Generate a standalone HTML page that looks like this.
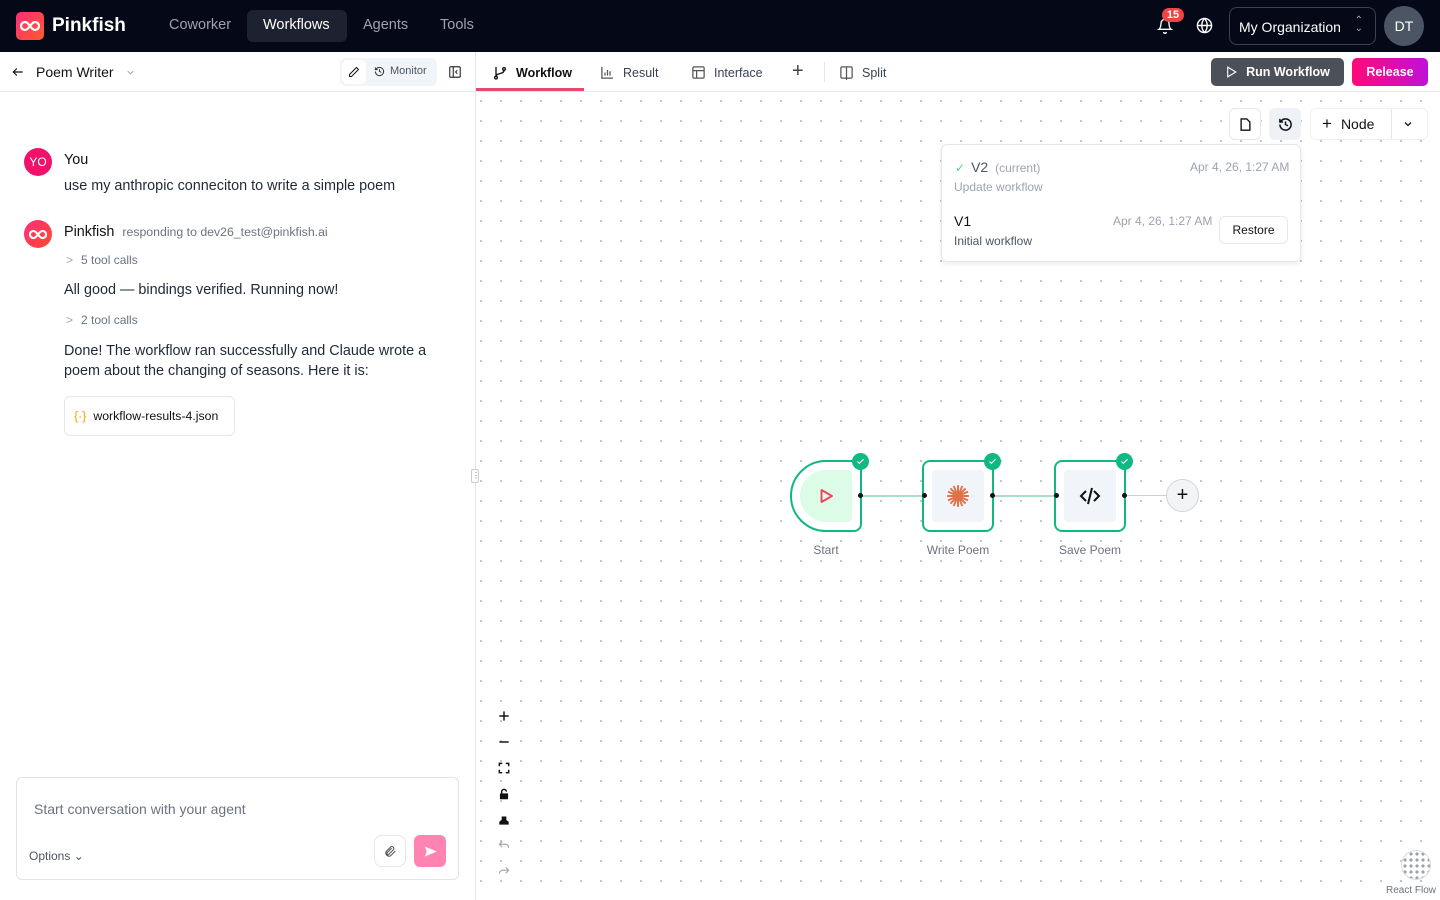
<!DOCTYPE html>
<html><head><meta charset="utf-8">
<style>
*{box-sizing:border-box;margin:0;padding:0}
body{width:1440px;height:900px;overflow:hidden;font-family:"Liberation Sans",sans-serif;background:#fff;color:#111;position:relative}
.abs{position:absolute}
.top{left:0;top:0;width:1440px;height:52px;background:#050816}
.nav{font-size:14.5px;color:#9ca3af;top:17px}
.chat{left:0;top:52px;width:476px;height:848px;border-right:1px solid #e5e7eb}
.canvas{left:476px;top:92px;width:964px;height:808px;background-image:radial-gradient(circle,#b8bcc4 0.9px,transparent 1.2px);background-size:20px 20px;background-position:-5px -1px}
.tab{font-size:12.5px;color:#374151;top:65px;display:flex;align-items:center;gap:8px}
svg{display:block}
.node{width:72px;height:72px;border:2.5px solid #10b981;border-radius:8px;background:#fff}
.inner{position:absolute;left:8px;top:8px;width:52px;height:52px;background:#f1f4f8;border-radius:4px;display:flex;align-items:center;justify-content:center}
.chk{position:absolute;right:-9px;top:-9px;width:17px;height:17px;border-radius:50%;background:#10b981;display:flex;align-items:center;justify-content:center}
.lbl{font-size:12px;color:#6b7280;text-align:center;width:120px}
.dot{width:5px;height:5px;border-radius:50%;background:#111}
.ctrl{left:497px;width:14px;height:14px}
.t14{font-size:14.4px}
</style></head><body>
<div class="abs top"></div>
<div class="abs" style="left:16px;top:12px;width:28px;height:28px;border-radius:5px;background:linear-gradient(135deg,#ff2d7a,#ff5a2d);display:flex;align-items:center;justify-content:center">
<svg width="20" height="12" viewBox="0 0 20 12"><path d="M5 2a4 4 0 1 0 0 8c2 0 3.5-2 5-4s3-4 5-4a4 4 0 1 1 0 8c-2 0-3.5-2-5-4S7 2 5 2z" fill="none" stroke="#fff" stroke-width="2.2"/></svg></div>
<div class="abs" style="left:52px;top:15px;font-size:19px;font-weight:bold;color:#fff">Pinkfish</div>
<div class="abs nav" style="left:169px">Coworker</div>
<div class="abs" style="left:247px;top:10px;width:100px;height:32px;border-radius:6px;background:#1c2230"></div>
<div class="abs nav" style="left:263px;color:#fff">Workflows</div>
<div class="abs nav" style="left:363px">Agents</div>
<div class="abs nav" style="left:440px">Tools</div>
<svg class="abs" style="left:1157px;top:18px" width="16" height="16" viewBox="0 0 24 24" fill="none" stroke="#fff" stroke-width="2"><path d="M6 8a6 6 0 0 1 12 0c0 7 3 9 3 9H3s3-2 3-9M10 21a2 2 0 0 0 4 0"/></svg>
<div class="abs" style="left:1162px;top:8px;width:22px;height:14px;border-radius:7px;background:#ef4444;color:#fff;font-size:11px;font-weight:bold;text-align:center;line-height:14px">15</div>
<svg class="abs" style="left:1196px;top:17px" width="17" height="17" viewBox="0 0 24 24" fill="none" stroke="#fff" stroke-width="2"><circle cx="12" cy="12" r="10"/><path d="M2 12h20M12 2a15 15 0 0 1 0 20M12 2a15 15 0 0 0 0 20"/></svg>
<div class="abs" style="left:1229px;top:7px;width:147px;height:38px;border:1px solid #3a4150;border-radius:8px;color:#fff;font-size:14px;padding:11px 0 0 9px">My Organization<span style="position:absolute;right:12px;top:9px;font-size:10px;color:#aaa;line-height:8px">⌃<br>⌄</span></div>
<div class="abs" style="left:1384px;top:6px;width:40px;height:40px;border-radius:50%;background:#4b5563;color:#fff;font-size:14px;text-align:center;line-height:40px">DT</div>

<div class="abs chat"></div>
<div class="abs" style="left:0;top:91px;width:476px;border-top:1px solid #e5e7eb"></div>
<svg class="abs" style="left:11px;top:65px" width="14" height="14" viewBox="0 0 24 24" fill="none" stroke="#111" stroke-width="2"><path d="M20 12H4M10 6l-6 6 6 6"/></svg>
<div class="abs" style="left:36px;top:64px;font-size:14px">Poem Writer</div>
<svg class="abs" style="left:125px;top:67px" width="11" height="11" viewBox="0 0 24 24" fill="none" stroke="#9ca3af" stroke-width="2"><path d="M6 9l6 6 6-6"/></svg>
<div class="abs" style="left:340px;top:58px;width:97px;height:28px;border-radius:6px;background:#f1f4f8"></div>
<div class="abs" style="left:342px;top:60px;width:24px;height:24px;border-radius:5px;background:#fff"></div>
<svg class="abs" style="left:348px;top:66px" width="12" height="12" viewBox="0 0 24 24" fill="none" stroke="#111" stroke-width="2"><path d="M17 3l4 4L7 21H3v-4z"/></svg>
<svg class="abs" style="left:374px;top:66px" width="11" height="11" viewBox="0 0 24 24" fill="none" stroke="#333" stroke-width="2.2"><path d="M3 12a9 9 0 1 0 3-6.7L3 8M3 3v5h5M12 7v5l4 2"/></svg>
<div class="abs" style="left:390px;top:65px;font-size:11px;color:#4b5563">Monitor</div>
<svg class="abs" style="left:448px;top:65px" width="14" height="14" viewBox="0 0 24 24" fill="none" stroke="#333" stroke-width="2"><rect x="3" y="3" width="18" height="18" rx="2"/><path d="M9 3v18M16 9l-3 3 3 3"/></svg>

<div class="abs" style="left:24px;top:148px;width:28px;height:28px;border-radius:50%;background:#f0126b;color:#fff;font-size:12px;text-align:center;line-height:28px">YO</div>
<div class="abs t14" style="left:64px;top:152px">You</div>
<div class="abs t14" style="left:64px;top:178px;color:#1f2937">use my anthropic conneciton to write a simple poem</div>
<div class="abs" style="left:24px;top:220px;width:28px;height:28px;border-radius:50%;background:linear-gradient(135deg,#ff2d7a,#ff4a2d);display:flex;align-items:center;justify-content:center"><svg width="18" height="11" viewBox="0 0 20 12"><path d="M5 2a4 4 0 1 0 0 8c2 0 3.5-2 5-4s3-4 5-4a4 4 0 1 1 0 8c-2 0-3.5-2-5-4S7 2 5 2z" fill="none" stroke="#fff" stroke-width="2.4"/></svg></div>
<div class="abs t14" style="left:64px;top:224px">Pinkfish <span style="font-size:12.3px;color:#6b7280;margin-left:4px">responding to dev26_test@pinkfish.ai</span></div>
<div class="abs" style="left:66px;top:253px;font-size:12px;color:#6b7280"><span style="color:#9ca3af;margin-right:8px">&gt;</span>5 tool calls</div>
<div class="abs t14" style="left:64px;top:282px;color:#1f2937">All good — bindings verified. Running now!</div>
<div class="abs" style="left:66px;top:313px;font-size:12px;color:#6b7280"><span style="color:#9ca3af;margin-right:8px">&gt;</span>2 tool calls</div>
<div class="abs t14" style="left:64px;top:341px;color:#1f2937;line-height:20px;width:380px">Done! The workflow ran successfully and Claude wrote a poem about the changing of seasons. Here it is:</div>
<div class="abs" style="left:64px;top:396px;width:171px;height:40px;border:1px solid #e5e7eb;border-radius:6px;font-size:12.3px;padding:12px 0 0 9px"><span style="color:#f59e0b;margin-right:7px">{·}</span>workflow-results-4.json</div>

<div class="abs" style="left:16px;top:777px;width:443px;height:103px;border:1px solid #e0e3e8;border-radius:6px"></div>
<div class="abs" style="left:34px;top:801px;font-size:14px;color:#6b7280">Start conversation with your agent</div>
<div class="abs" style="left:29px;top:849px;font-size:12px;color:#4b5563">Options ⌄</div>
<div class="abs" style="left:374px;top:835px;width:32px;height:32px;border:1px solid #e5e7eb;border-radius:8px;display:flex;align-items:center;justify-content:center"><svg width="13" height="13" viewBox="0 0 24 24" fill="none" stroke="#555" stroke-width="2"><path d="M21 11l-9 9a6 6 0 0 1-8-8l9-9a4 4 0 0 1 5 5l-9 9a2 2 0 0 1-3-3l8-8"/></svg></div>
<div class="abs" style="left:414px;top:835px;width:32px;height:32px;border-radius:6px;background:#ff84b2;display:flex;align-items:center;justify-content:center"><svg width="15" height="15" viewBox="0 0 24 24"><path d="M3 4l19 8-19 8 3-8z" fill="#fff"/></svg></div>

<div class="abs canvas"></div>
<div class="abs" style="left:476px;top:91px;width:964px;border-top:1px solid #e5e7eb"></div>
<div class="abs" style="left:471px;top:469px;width:8px;height:14px;border:1px solid #ccc;border-radius:2px;background:#fff;font-size:8px;line-height:12px;text-align:center;color:#666">⋮</div>
<div class="abs tab" style="left:492px;font-weight:bold;color:#111"><svg width="16" height="16" viewBox="0 0 24 24" fill="none" stroke="#111" stroke-width="2"><circle cx="6" cy="19" r="2"/><circle cx="18" cy="6" r="2"/><path d="M6 3v14M18 8c0 6-12 4-12 9"/></svg>Workflow</div>
<div class="abs" style="left:476px;top:88px;width:108px;height:3px;background:#e8486e"></div>
<div class="abs tab" style="left:600px"><svg width="15" height="15" viewBox="0 0 24 24" fill="none" stroke="#555" stroke-width="2"><path d="M3 3v18h18M8 17v-5M12 17V8M16 17v-7"/></svg>Result</div>
<div class="abs tab" style="left:691px"><svg width="15" height="15" viewBox="0 0 24 24" fill="none" stroke="#555" stroke-width="2"><rect x="3" y="3" width="18" height="18" rx="2"/><path d="M3 9h18M9 9v12"/></svg>Interface</div>
<div class="abs" style="left:792px;top:60px;font-size:20px;color:#444">+</div>
<div class="abs" style="left:824px;top:62px;height:20px;border-left:1px solid #e5e7eb"></div>
<div class="abs tab" style="left:839px"><svg width="15" height="15" viewBox="0 0 24 24" fill="none" stroke="#555" stroke-width="2"><rect x="3" y="3" width="18" height="18" rx="2"/><path d="M12 3v21"/></svg>Split</div>
<div class="abs" style="left:1211px;top:58px;width:133px;height:28px;border-radius:5px;background:#4b5059;color:#fff;font-size:12.5px;font-weight:bold;display:flex;align-items:center;justify-content:center;gap:8px"><svg width="13" height="14" viewBox="0 0 24 24" fill="none" stroke="#fff" stroke-width="2"><path d="M5 3l15 9-15 9z"/></svg>Run Workflow</div>
<div class="abs" style="left:1352px;top:58px;width:76px;height:28px;border-radius:5px;background:linear-gradient(90deg,#ff0a78,#c010d8);color:#fff;font-size:12.5px;font-weight:bold;text-align:center;line-height:28px">Release</div>

<div class="abs" style="left:1229px;top:108px;width:32px;height:32px;border:1px solid #e5e7eb;border-radius:6px;background:#fff;display:flex;align-items:center;justify-content:center"><svg width="15" height="15" viewBox="0 0 24 24" fill="none" stroke="#111" stroke-width="2.2"><path d="M5 3h9l5 5v13H5z"/></svg></div>
<div class="abs" style="left:1269px;top:108px;width:32px;height:32px;border-radius:6px;background:#eef2f7;display:flex;align-items:center;justify-content:center"><svg width="15" height="15" viewBox="0 0 24 24" fill="none" stroke="#111" stroke-width="2.4"><path d="M3 12a9 9 0 1 0 3-6.7L3 8M3 3v5h5M12 7v5l4 2"/></svg></div>
<div class="abs" style="left:1310px;top:108px;width:118px;height:32px;border-radius:6px;background:#fff;border:1px solid #f0f0f0"></div>
<div class="abs" style="left:1391px;top:108px;height:32px;border-left:1px solid #e5e7eb"></div>
<div class="abs" style="left:1322px;top:114px;font-size:14px;color:#111"><span style="font-size:17px;margin-right:9px">+</span>Node</div>
<svg class="abs" style="left:1402px;top:118px" width="12" height="12" viewBox="0 0 24 24" fill="none" stroke="#111" stroke-width="2.5"><path d="M6 9l6 6 6-6"/></svg>

<div class="abs" style="left:941px;top:144px;width:360px;height:118px;border:1px solid #e5e7eb;border-radius:6px;background:#fff;box-shadow:0 2px 6px rgba(0,0,0,.08)"></div>
<div class="abs" style="left:955px;top:159px;font-size:14px;color:#4b5563"><span style="color:#4ade80;font-size:12px;margin-right:6px">✓</span>V2 <span style="font-size:12px;color:#9ca3af;margin-left:3px">(current)</span></div>
<div class="abs" style="left:1190px;top:160px;font-size:12px;color:#9ca3af">Apr 4, 26, 1:27 AM</div>
<div class="abs" style="left:954px;top:180px;font-size:12px;color:#9ca3af">Update workflow</div>
<div class="abs" style="left:954px;top:213px;font-size:14px;color:#111">V1</div>
<div class="abs" style="left:1113px;top:214px;font-size:12px;color:#9ca3af">Apr 4, 26, 1:27 AM</div>
<div class="abs" style="left:954px;top:234px;font-size:12px;color:#4b5563">Initial workflow</div>
<div class="abs" style="left:1219px;top:216px;width:69px;height:28px;border:1px solid #e5e7eb;border-radius:6px;font-size:12px;text-align:center;line-height:27px">Restore</div>

<div class="abs" style="left:860px;top:495px;width:64px;border-top:2px solid #a7dfc4"></div>
<div class="abs" style="left:992px;top:495px;width:64px;border-top:2px solid #a7dfc4"></div>
<div class="abs" style="left:1124px;top:495px;width:44px;border-top:1px solid #cbd0d8"></div>
<div class="abs node" style="left:790px;top:460px;border-radius:36px 8px 8px 36px"><div class="inner" style="background:#dcfce7;border-radius:26px 4px 4px 26px"><svg width="18" height="18" viewBox="0 0 24 24" fill="none" stroke="#f43f5e" stroke-width="2.5"><path d="M6 4l14 8-14 8z" stroke-linejoin="round"/></svg></div><div class="chk"><svg width="9" height="9" viewBox="0 0 24 24" fill="none" stroke="#fff" stroke-width="3"><path d="M4 12l5 5 11-11"/></svg></div></div>
<div class="abs node" style="left:922px;top:460px"><div class="inner"><svg width="26" height="26" viewBox="0 0 24 24" stroke="#e0724a" stroke-width="1.8"><path d="M12 2v20M2 12h20M5 5l14 14M19 5L5 19M8 2.8l8 18.4M16 2.8L8 21.2M2.8 8l18.4 8M2.8 16l18.4-8"/></svg></div><div class="chk"><svg width="9" height="9" viewBox="0 0 24 24" fill="none" stroke="#fff" stroke-width="3"><path d="M4 12l5 5 11-11"/></svg></div></div>
<div class="abs node" style="left:1054px;top:460px"><div class="inner"><svg width="24" height="24" viewBox="0 0 24 24" fill="none" stroke="#111" stroke-width="2"><path d="M8 7l-5 5 5 5M16 7l5 5-5 5M14 4l-4 16"/></svg></div><div class="chk"><svg width="9" height="9" viewBox="0 0 24 24" fill="none" stroke="#fff" stroke-width="3"><path d="M4 12l5 5 11-11"/></svg></div></div>
<div class="abs dot" style="left:858px;top:493px"></div><div class="abs dot" style="left:922px;top:493px"></div>
<div class="abs dot" style="left:990px;top:493px"></div><div class="abs dot" style="left:1054px;top:493px"></div>
<div class="abs dot" style="left:1122px;top:493px"></div>
<div class="abs" style="left:1166px;top:479px;width:33px;height:33px;border-radius:50%;border:1px solid #d1d5db;background:#f3f4f6;text-align:center;line-height:30px;font-size:20px;color:#111">+</div>
<div class="abs lbl" style="left:766px;top:543px">Start</div>
<div class="abs lbl" style="left:898px;top:543px">Write Poem</div>
<div class="abs lbl" style="left:1030px;top:543px">Save Poem</div>

<svg class="abs ctrl" style="top:709px" viewBox="0 0 24 24" stroke="#111" stroke-width="2.5"><path d="M12 4v16M4 12h16"/></svg>
<svg class="abs ctrl" style="top:735px" viewBox="0 0 24 24" stroke="#111" stroke-width="2.5"><path d="M4 12h16"/></svg>
<svg class="abs ctrl" style="top:761px" viewBox="0 0 24 24" fill="none" stroke="#111" stroke-width="2.5"><path d="M4 9V4h5M15 4h5v5M20 15v5h-5M9 20H4v-5"/></svg>
<svg class="abs ctrl" style="top:787px" viewBox="0 0 24 24"><rect x="5" y="11" width="14" height="10" rx="1" fill="#111"/><path d="M8 11V8a4 4 0 0 1 8 0" fill="none" stroke="#111" stroke-width="2.5"/></svg>
<svg class="abs ctrl" style="top:813px" viewBox="0 0 24 24"><path d="M4 20h16v-5l-4-3V6h-8v6l-4 3z" fill="#111"/></svg>
<svg class="abs ctrl" style="top:839px" viewBox="0 0 24 24" fill="none" stroke="#aaa" stroke-width="2"><path d="M9 14L4 9l5-5M4 9h10a6 6 0 0 1 6 6"/></svg>
<svg class="abs ctrl" style="top:865px" viewBox="0 0 24 24" fill="none" stroke="#aaa" stroke-width="2"><path d="M15 14l5-5-5-5M20 9H10a6 6 0 0 0-6 6"/></svg>

<div class="abs" style="left:1401px;top:850px;width:30px;height:30px;border-radius:50%;border:1px solid #ddd;background:#fff;background-image:radial-gradient(circle,#9ca3af 1.5px,transparent 1.8px);background-size:6px 6px;background-position:0 0"></div>
<div class="abs" style="left:1386px;top:885px;font-size:10px;color:#6b7280">React Flow</div>
</body></html>
